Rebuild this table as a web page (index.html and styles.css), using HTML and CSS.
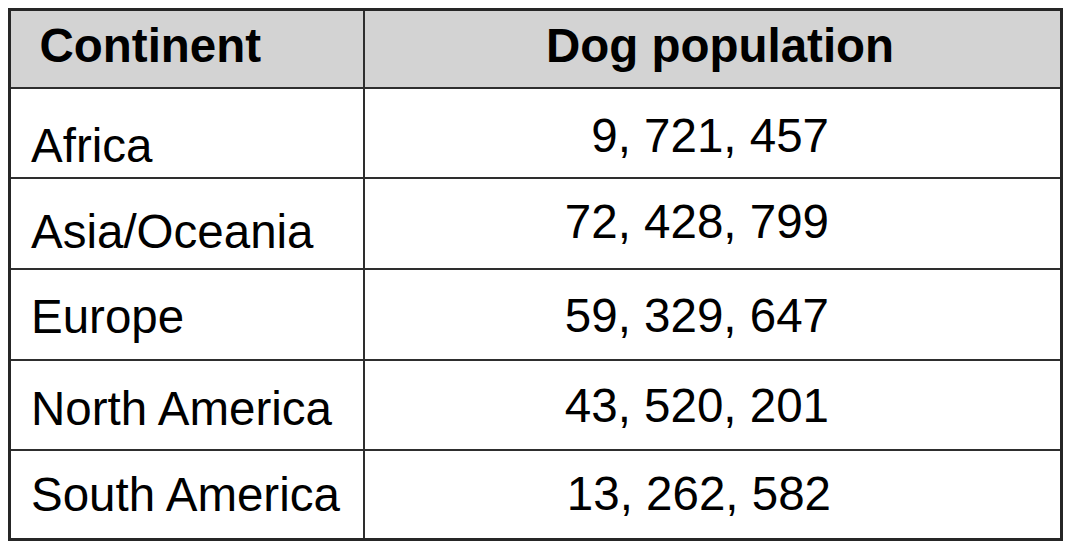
FILE: index.html
```html
<!DOCTYPE html>
<html lang="en">
<head>
<meta charset="utf-8">
<title>Dog population by continent</title>
<link rel="stylesheet" href="styles.css">
</head>
<body>
<div class="table" role="table">
  <div class="cell head name-head" role="columnheader">Continent</div>
  <div class="cell head value-head" role="columnheader">Dog population</div>

  <div class="cell name r1" role="cell">Africa</div>
  <div class="cell value r1" role="cell">9, 721, 457</div>

  <div class="cell name r2" role="cell">Asia/Oceania</div>
  <div class="cell value r2" role="cell">72, 428, 799</div>

  <div class="cell name r3" role="cell">Europe</div>
  <div class="cell value r3" role="cell">59, 329, 647</div>

  <div class="cell name r4" role="cell">North America</div>
  <div class="cell value r4" role="cell">43, 520, 201</div>

  <div class="cell name r5 last" role="cell">South America</div>
  <div class="cell value r5 last" role="cell">13, 262, 582</div>
</div>
</body>
</html>
```
FILE: styles.css
```css
html, body {
  margin: 0;
  padding: 0;
  background: #ffffff;
}

body {
  font-family: "Liberation Sans", Arial, sans-serif;
  color: #000;
}

.table {
  box-sizing: border-box;
  width: 1055px;
  margin: 8px 0 0 8px;
  border: 3px solid #262626;
  display: grid;
  grid-template-columns: 354px 1fr;
  grid-template-rows: 78px 90px 91px 90.5px 90.5px 87px;
}

.cell {
  box-sizing: border-box;
  font-size: 47.5px;
  line-height: 54px;
  white-space: nowrap;
  border-bottom: 2px solid #2e2e2e;
}

.cell.last {
  border-bottom: none;
}

.name,
.name-head {
  border-right: 2px solid #2e2e2e;
}

.head {
  background: #d3d3d3;
  font-weight: bold;
  padding-top: 8px;
}

.name-head {
  padding-left: 28.5px;
}

.value-head {
  text-align: center;
  padding-left: 15px;
}

.name {
  padding-left: 20px;
}

.value {
  text-align: right;
  padding-right: 231px;
}

/* per-row vertical placement of the text, as in the original slide */
.name.r1 { padding-top: 29.5px; }
.name.r2 { padding-top: 25.5px; }
.name.r3 { padding-top: 19.5px; }
.name.r4 { padding-top: 21px; }
.name.r5 { padding-top: 17px; }

.value.r1 { padding-top: 19.5px; }
.value.r2 { padding-top: 15.5px; }
.value.r3 { padding-top: 18.5px; }
.value.r4 { padding-top: 18px; }
.value.r5 { padding-top: 15.5px; padding-right: 229px; }
```
